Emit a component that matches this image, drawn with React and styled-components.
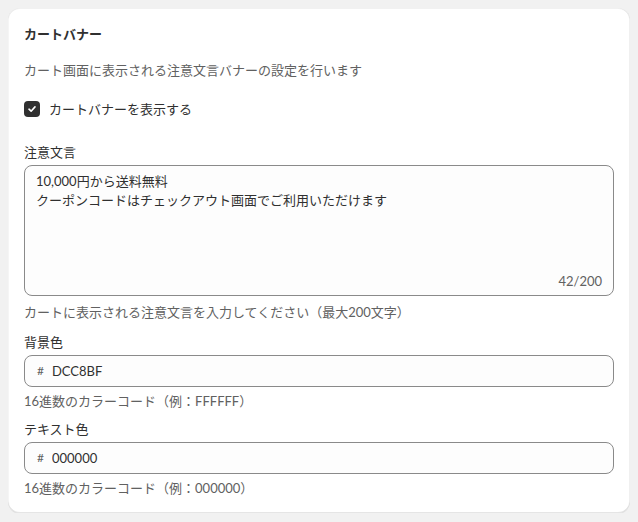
import React from "react";
import styled, { createGlobalStyle } from "styled-components";

const Global = createGlobalStyle`
  html, body {
    background: #f1f1f1;
  }
  body {
    margin: 8px;
    font-family: Lato, "Noto Sans CJK JP", sans-serif;
    font-size: 13px;
    line-height: 20px;
    color: #303030;
  }
  * { box-sizing: border-box; }
`;

const Card = styled.section`
  background: #ffffff;
  border-radius: 12px;
  padding: 16px 16px 15px;
  box-shadow: 0 1px 0 0 rgba(26, 26, 26, 0.07),
    inset 0 -1px 0 0 rgba(204, 204, 204, 0.5),
    inset -1px 0 0 0 rgba(0, 0, 0, 0.06),
    inset 1px 0 0 0 rgba(0, 0, 0, 0.04),
    inset 0 1px 0 0 rgba(208, 208, 208, 0.3);
  display: flex;
  flex-direction: column;
`;

const Title = styled.h2`
  margin: 0;
  font-size: 13px;
  line-height: 20px;
  font-weight: 700;
  color: #303030;
`;

const Text = styled.p`
  margin: ${(p) => p.$mt || 0}px 0 0;
  font-size: 13px;
  line-height: 20px;
  color: ${(p) => (p.$tone === "subdued" ? "#616161" : "#303030")};
`;

const CheckRow = styled.label`
  display: flex;
  align-items: center;
  gap: 9px;
  margin-top: 19px;
  height: 20px;
  color: #303030;
`;

const CheckBox = styled.span`
  width: 16px;
  height: 16px;
  border-radius: 4px;
  background: #303030;
  display: flex;
  align-items: center;
  justify-content: center;
  flex: none;
`;

const Field = styled.div`
  display: flex;
  flex-direction: column;
  margin-top: ${(p) => p.$mt}px;
`;

const Label = styled.div`
  line-height: 20px;
  color: #303030;
  margin-bottom: ${(p) => p.$mb ?? 4}px;
`;

const AreaBox = styled.div`
  border: 1px solid #8a8a8a;
  border-radius: 8px;
  height: 131px;
  display: flex;
  flex-direction: column;
  padding: 6px 11px 4px 11px;
  background: #fdfdfd;
`;

const Area = styled.textarea`
  flex: 1;
  border: none;
  outline: none;
  resize: none;
  padding: 0;
  margin: 0;
  font: inherit;
  font-size: 13px;
  line-height: 19px;
  color: #303030;
  background: transparent;
`;

const Counter = styled.div`
  align-self: flex-end;
  color: #616161;
  line-height: 20px;
`;

const InputBox = styled.div`
  border: 1px solid #8a8a8a;
  border-radius: 8px;
  height: 32px;
  display: flex;
  align-items: center;
  gap: 8px;
  padding: 0 11px 0 12px;
  background: #fdfdfd;
`;

const Prefix = styled.span`
  color: #616161;
  font-size: 12px;
`;

const Input = styled.input`
  flex: 1;
  border: none;
  outline: none;
  padding: 0;
  font: inherit;
  font-size: 13px;
  color: #303030;
  background: transparent;
`;

const Help = styled.div`
  margin-top: ${(p) => p.$mt || 4}px;
  color: #616161;
  line-height: 20px;
`;

const ColorField = ({ label, value, help, mt }) => (
  <Field $mt={mt}>
    <Label $mb={3}>{label}</Label>
    <InputBox>
      <Prefix>#</Prefix>
      <Input defaultValue={value} readOnly />
    </InputBox>
    <Help>{help}</Help>
  </Field>
);

export default function App() {
  return (
    <>
      <Global />
      <Card>
        <Title>カートバナー</Title>
        <Text $tone="subdued" $mt={16}>
          カート画面に表示される注意文言バナーの設定を行います
        </Text>
        <CheckRow>
          <CheckBox>
            <svg width="10" height="10" viewBox="0 0 10 10" fill="none">
              <path
                d="M2 5.2 L4.1 7.2 L8 2.9"
                stroke="#fff"
                strokeWidth="1.6"
                strokeLinecap="round"
                strokeLinejoin="round"
              />
            </svg>
          </CheckBox>
          カートバナーを表示する
        </CheckRow>
        <Field $mt={23}>
          <Label $mb={3}>注意文言</Label>
          <AreaBox>
            <Area
              readOnly
              defaultValue={"10,000円から送料無料\nクーポンコードはチェックアウト画面でご利用いただけます"}
            />
            <Counter>42/200</Counter>
          </AreaBox>
          <Help $mt={6}>
            カートに表示される注意文言を入力してください（最大200文字）
          </Help>
        </Field>
        <ColorField
          mt={10}
          label="背景色"
          value="DCC8BF"
          help="16進数のカラーコード（例：FFFFFF）"
        />
        <ColorField
          mt={8}
          label="テキスト色"
          value="000000"
          help="16進数のカラーコード（例：000000）"
        />
      </Card>
    </>
  );
}
